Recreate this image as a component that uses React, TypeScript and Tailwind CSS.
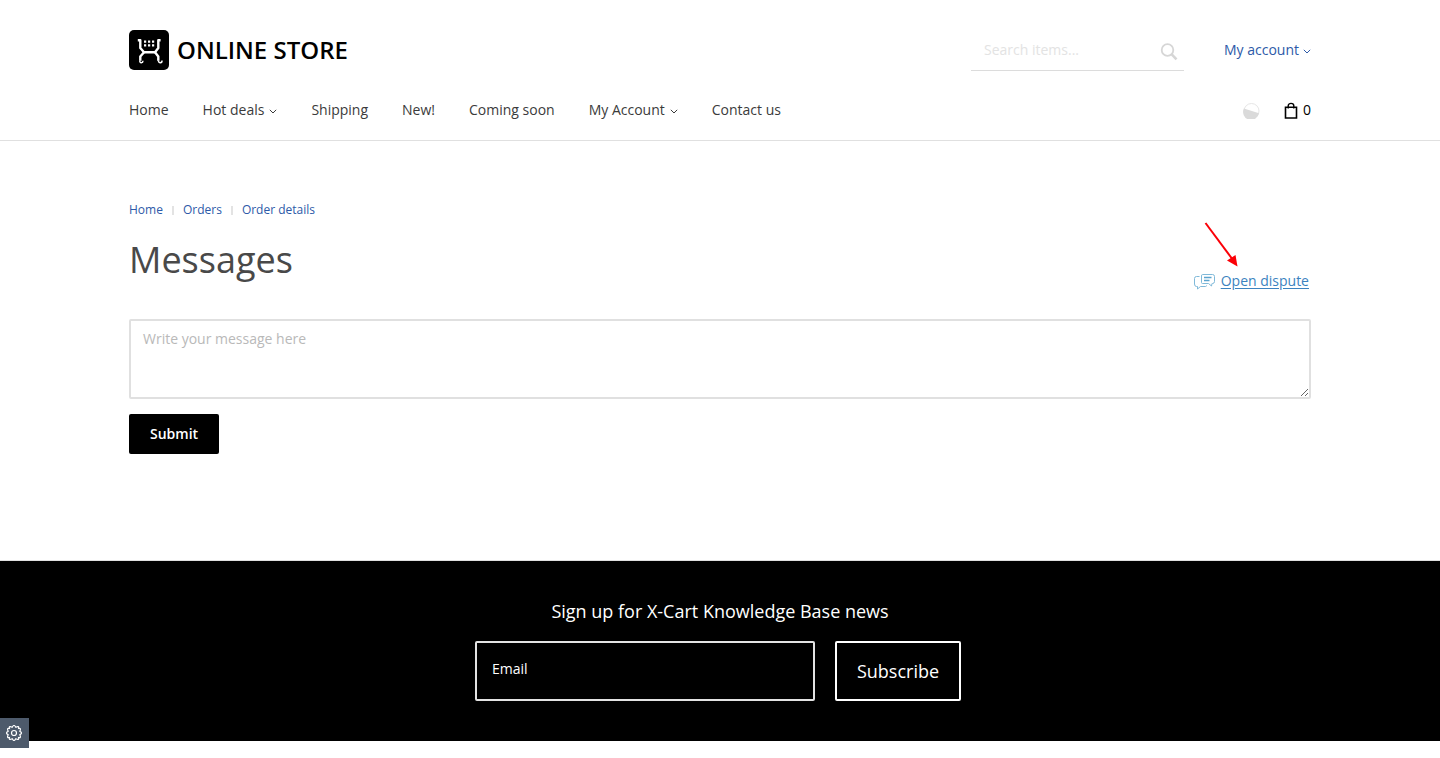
import React from "react";

function Chevron() {
  return (
    <svg className="mt-[2px] h-[5px] w-2" viewBox="0 0 8 5" fill="none" stroke="currentColor" aria-hidden="true">
      <path d="M0.800 0.800 L4 4 L7.200 0.800" />
    </svg>
  );
}

function LogoMark() {
  return (
    <svg className="size-10" viewBox="0 0 40 40" aria-hidden="true">
      <rect width="40" height="40" rx="5" fill="#000" />
      <g fill="none" stroke="#fff" strokeWidth="2.400">
        <path d="M8.800 10.200 H11.300 V18 L15 22.200 H26 L29.300 18 V10.200 H31.600" strokeLinejoin="round" />
        <path d="M11.300 30.800 V26.500 L15 22.200 M26 22.200 L29.300 26.500 V30.800" strokeLinejoin="round" />
      </g>
      <g fill="none" stroke="#fff" strokeWidth="1.400">
        <path d="M10.800 30.500 Q10.600 32.800 12.300 32.800 Q14 32.600 14 30.800" />
        <path d="M29.300 30.500 Q29.600 32.800 31.400 32.800 Q33.200 32.600 33 30.500" />
      </g>
      <path
        fill="#fff"
        d="M15 10.500h2.200v2.200H15zM19 10.500h2.200v2.200H19zM23 10.500h2.200v2.200H23zM15 14.300h2.200v2.200H15zM19 14.300h2.200v2.200H19zM23 14.300h2.200v2.200H23z"
      />
    </svg>
  );
}

const links = [
  { label: "Home" },
  { label: "Hot deals", menu: true },
  { label: "Shipping" },
  { label: "New!" },
  { label: "Coming soon" },
  { label: "My Account", menu: true },
  { label: "Contact us" },
];

const crumbs = ["Home", "Orders", "Order details"];

function Header() {
  return (
    <header className="border-b border-[#e0e0e0]">
      <div className="mx-auto max-w-[1182px]">
        <div className="flex items-start justify-between pt-[30px]">
          <a href="#" className="flex items-center gap-2 text-2xl font-semibold text-black">
            <LogoMark />
            <span>ONLINE STORE</span>
          </a>
          <div className="flex gap-10">
            <form className="flex h-[41px] w-[213px] items-center border-b border-[#dcdcdc] pr-[6px] pl-[13px]">
              <input
                type="search"
                aria-label="Search items"
                placeholder="Search items..."
                className="min-w-0 flex-1 text-sm outline-none placeholder:text-[#e3e3e3]"
              />
              <button type="button" aria-label="Search" className="mt-1 text-[#d6d6d6]">
                <svg className="size-[18px]" viewBox="0 0 18 18" fill="none" stroke="currentColor">
                  <circle cx="7.500" cy="7" r="5.800" strokeWidth="1.800" />
                  <path d="M11.500 11.200 L16.500 16.300" strokeWidth="2.600" />
                </svg>
              </button>
            </form>
            <button type="button" className="flex h-10 items-center gap-1 text-sm text-[#2d5aa8]">
              My account <Chevron />
            </button>
          </div>
        </div>
        <div className="flex items-center justify-between pt-[29px] pb-5">
          <nav className="flex gap-[34px]">
            {links.map((l) => (
              <a key={l.label} href="#" className="flex items-center gap-[5px] text-sm text-[#3b3b3b]">
                {l.label}
                {l.menu && <Chevron />}
              </a>
            ))}
          </nav>
          <div className="flex items-center gap-6">
            <a href="#" aria-label="Compare">
              <svg className="size-[17px]" viewBox="0 0 17 17">
                <circle cx="8.500" cy="9" r="7.500" fill="#fff" stroke="#e6e6e6" />
                <path d="M0.900 6.500 L16 11.300 A8 8 0 1 1 0.900 6.500 Z" fill="#dadada" />
              </svg>
            </a>
            <a href="#" className="flex items-center gap-[5px] text-sm text-black" aria-label="Cart, 0 items">
              <svg className="h-[17px] w-[14px]" viewBox="0 0 14 17" fill="none" stroke="#000">
                <path d="M1.500 5.300 H12.500 V16 H1.500 Z" strokeWidth="1.600" />
                <path d="M4.200 6.500 V3.700 C4.200 0.600 9.800 0.600 9.800 3.700 V6.500" strokeWidth="1.400" />
              </svg>
              0
            </a>
          </div>
        </div>
      </div>
    </header>
  );
}

function Messages() {
  return (
    <main className="mx-auto w-full max-w-[1182px] pt-[60px] pb-[106px]">
      <nav aria-label="Breadcrumb" className="flex items-center text-xs leading-[18px] text-[#2d5aa8]">
        {crumbs.map((c, i) => (
          <React.Fragment key={c}>
            {i > 0 && <span className="mx-[9px] h-[9px] w-[2px] bg-[#e3e3e3]" />}
            <a href="#">{c}</a>
          </React.Fragment>
        ))}
      </nav>
      <div className="flex items-end justify-between pt-4">
        <h1 className="pb-[6px] text-4xl leading-[50px] text-[#494949]">Messages</h1>
        <div className="relative">
          <a href="#" className="flex items-center gap-[6px] pr-[2px] text-sm text-[#3c83c0]">
            <svg className="h-[17px] w-[21px]" viewBox="0 0 21 17" fill="none" stroke="#7fb9d9" aria-hidden="true">
              <path d="M8.500 1.500 H18.500 Q20.500 1.500 20.500 3.500 V8.500 Q20.500 10.500 18.500 10.500 H18 L17.500 13 L14.500 10.500 H8.500 Q7.500 10.500 7.500 9.500 V3 Q7.500 1.500 8.500 1.500 Z" />
              <path d="M10 4.500 H17.500 M10 7.500 H15.500" stroke="#5ba4cf" strokeWidth="1.300" />
              <path d="M5.500 3.500 H2.500 Q0.500 3.500 0.500 5.500 V11 Q0.500 13.500 2.500 13.500 H3.500 V16 L6.500 13.500 H11.500 Q12.500 13.500 12.500 12.500" />
            </svg>
            <span className="underline underline-offset-2">Open dispute</span>
          </a>
          <svg
            className="absolute bottom-full left-[10px] mb-[2px] h-[48px] w-[36px]"
            viewBox="0 0 36 48"
            aria-hidden="true"
          >
            <path d="M1.500 2 L29 39" stroke="#fb0007" strokeWidth="2" />
            <path d="M33.500 45.500 L23 39.500 L31.500 34 Z" fill="#fb0007" />
          </svg>
        </div>
      </div>
      <form className="flex flex-col items-start gap-[15px] pt-7">
        <textarea
          aria-label="Message"
          placeholder="Write your message here"
          className="block h-20 w-full resize-y rounded-[2px] border-2 border-[#e0e0e0] px-3 py-2 text-sm outline-none placeholder:text-[#b9b9b9]"
        />
        <button type="button" className="h-10 rounded-[2px] bg-black px-[21px] text-sm font-semibold text-white">
          Submit
        </button>
      </form>
    </main>
  );
}

function Newsletter() {
  return (
    <footer className="border-t border-[#e0e0e0] bg-black pt-9 pb-10 text-white">
      <h2 className="text-center text-lg font-medium">Sign up for X-Cart Knowledge Base news</h2>
      <form className="mt-4 flex justify-center gap-5 pr-1">
        <input
          type="email"
          aria-label="Email"
          placeholder="Email"
          className="h-[60px] w-[340px] rounded-[2px] border-2 border-[#e3e3e3] px-[15px] pb-[6px] text-sm font-medium outline-none placeholder:text-white"
        />
        <button type="button" className="h-[60px] rounded-[2px] border-2 border-white px-5 text-lg font-medium">
          Subscribe
        </button>
      </form>
    </footer>
  );
}

export default function App() {
  return (
    <div className="min-h-screen bg-white font-['Open_Sans',sans-serif]">
      <Header />
      <Messages />
      <Newsletter />
      <button
        type="button"
        aria-label="Settings"
        className="fixed bottom-[10px] left-0 flex h-[30px] w-[29px] items-center justify-center bg-[#4d5a6b] pr-px text-white"
      >
        <svg className="size-4" viewBox="0 0 16 16" fill="none" stroke="currentColor" strokeWidth="1.200">
          <path d="M6.200 2.200 Q8 -1.200 9.800 2.200 Q13.200 0.500 12.600 3.400 Q15.500 2.800 13.800 6.200 Q17.200 8 13.800 9.800 Q15.500 13.200 12.600 12.600 Q13.200 15.500 9.800 13.800 Q8 17.200 6.200 13.800 Q2.800 15.500 3.400 12.600 Q0.500 13.200 2.200 9.800 Q-1.200 8 2.200 6.200 Q0.500 2.800 3.400 3.400 Q2.800 0.500 6.200 2.200 Z" />
          <circle cx="8" cy="8" r="2.500" />
        </svg>
      </button>
    </div>
  );
}
